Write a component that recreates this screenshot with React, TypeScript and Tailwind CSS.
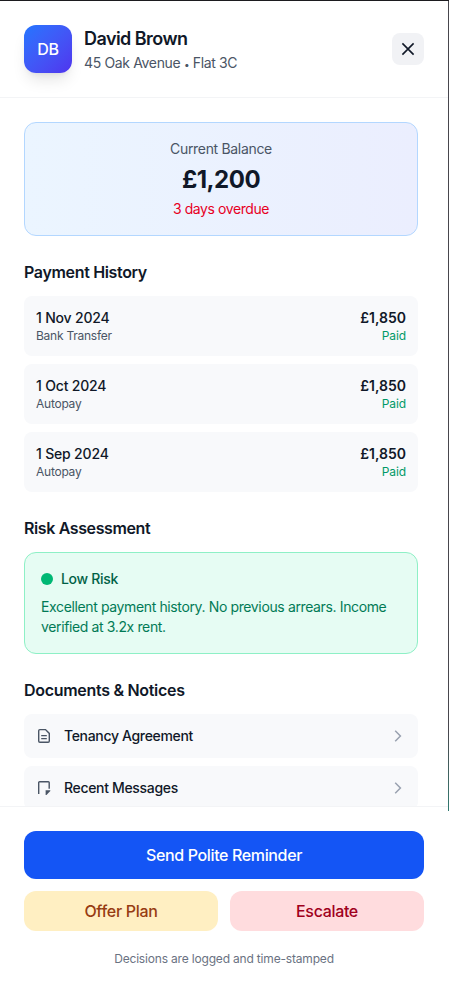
import React from "react";

type Payment = {
  date: string
  method: string
  amount: string
}

const payments: Payment[] = [
  { date: "1 Nov 2024", method: "Bank Transfer", amount: "£1,850" },
  { date: "1 Oct 2024", method: "Autopay", amount: "£1,850" },
  { date: "1 Sep 2024", method: "Autopay", amount: "£1,850" },
];

const FileIcon = () => (
  <svg viewBox="0 0 16 16" className="w-4 h-4" fill="none" stroke="currentColor" strokeWidth="1.4">
    <path d="M3.9 1.6h5.6l3.8 3.8v7.6a1.2 1.2 0 0 1-1.2 1.2H3.9a1.2 1.2 0 0 1-1.2-1.2V2.8a1.2 1.2 0 0 1 1.2-1.2z" />
    <path d="M5.2 7.6h5.6M5.2 10.6h5.6" />
  </svg>
);

const NoteIcon = () => (
  <svg viewBox="0 0 16 16" className="w-4 h-4" fill="none">
    <path d="M2.7 14V2.6a.9.9 0 0 1 .9-.9h8.7a.9.9 0 0 1 .9.9v6.2" stroke="currentColor" strokeWidth="1.4" />
    <path d="M9.6 10.3h4.7v.7L10.5 15h-.9z" fill="currentColor" />
  </svg>
);

const CloseIcon = () => (
  <svg viewBox="0 0 20 20" className="w-5 h-5" fill="none" stroke="currentColor" strokeWidth="1.6">
    <path d="M4.4 4.4l11.2 11.2M15.6 4.4L4.4 15.6" />
  </svg>
);

const ChevronIcon = () => (
  <svg viewBox="0 0 16 16" className="w-4 h-4 mr-px" fill="none" stroke="currentColor" strokeWidth="1.5">
    <path d="M6.2 2.8L11.4 8l-5.2 5.2" />
  </svg>
);

const PaymentRow = ({ payment }: { payment: Payment }) => {
  return (
    <div className="flex items-center justify-between p-3 bg-[#f8f9fb] rounded-lg">
      <div>
        <div className="text-sm font-medium text-gray-900 tracking-[-0.18px]">{payment.date}</div>
        <div className="text-xs text-gray-600 tracking-[-0.25px]">{payment.method}</div>
      </div>
      <div className="text-right">
        <div className="text-sm font-semibold text-gray-900">{payment.amount}</div>
        <div className="text-xs text-emerald-600 tracking-[-0.1px]">Paid</div>
      </div>
    </div>
  )
}

const DocumentRow = ({ icon, label }: { icon: React.ReactNode, label: string }) => {
  return (
    <button className="w-full flex items-center justify-between p-3 bg-[#f8f9fb] rounded-lg">
      <span className="flex items-center gap-3">
        <span className="w-4 h-4 text-gray-600">{icon}</span>
        <span className="text-sm font-medium text-gray-900 tracking-[-0.33px]">{label}</span>
      </span>
      <span className="text-gray-400">
        <ChevronIcon />
      </span>
    </button>
  )
}

const App = () => {
  return (
    <div className="relative flex flex-col w-[449px] h-[991px] overflow-hidden bg-white border-t border-[#1c1b1f] font-['Inter',sans-serif]">
      <div className="absolute right-0 top-0 w-px h-[810px] bg-linear-to-b from-[#47464d] from-90% to-[#2f7a70]" />

      <header className="flex items-center justify-between shrink-0 p-6 mr-px border-b border-gray-100">
        <div className="flex items-center gap-3">
          <div className="flex items-center justify-center w-12 h-12 rounded-xl bg-linear-to-br from-[#2175ff] to-[#4f33ee] text-white font-medium tracking-[-0.3px] shadow-lg">
            DB
          </div>
          <div>
            <h2 className="text-lg leading-7 font-semibold text-gray-900 tracking-[-0.55px]">David Brown</h2>
            <p className="text-sm text-gray-600 tracking-[-0.35px]">
              45 Oak Avenue <span className="text-[10px]">•</span> Flat 3C
            </p>
          </div>
        </div>
        <button className="flex items-center justify-center w-8 h-8 rounded-lg bg-[#f1f2f5] text-gray-900">
          <CloseIcon />
        </button>
      </header>

      <main className="flex-1 min-h-0 overflow-hidden p-6 mr-[7px] space-y-6">
        <section className="p-4 text-center rounded-xl border border-[#b3d7ff] bg-linear-to-r from-[#ebf5ff] to-[#ebeefe]">
          <div className="text-sm text-gray-600 mb-1 tracking-[-0.32px]">Current Balance</div>
          <div className="text-2xl leading-[34px] mb-0.5 font-bold text-gray-900 tracking-[-0.5px]">£1,200</div>
          <div className="text-sm text-[#e7001f] tracking-[-0.42px]">3 days overdue</div>
        </section>

        <section>
          <h3 className="font-semibold text-gray-900 mb-3 tracking-[-0.34px]">Payment History</h3>
          <div className="space-y-2">
            {payments.map((payment) => (
              <PaymentRow key={payment.date} payment={payment} />
            ))}
          </div>
        </section>

        <section>
          <h3 className="font-semibold text-gray-900 mb-3 tracking-[-0.38px]">Risk Assessment</h3>
          <div className="p-4 rounded-xl border border-[#8ef0c6] bg-[#e6fcf3]">
            <div className="flex items-center gap-2 mb-2">
              <span className="w-3 h-3 rounded-full bg-[#00b874]" />
              <span className="text-sm font-medium text-emerald-800 tracking-[-0.3px]">Low Risk</span>
            </div>
            <p className="text-sm text-emerald-700 tracking-[-0.37px]">
              Excellent payment history. No previous arrears. Income verified at 3.2x rent.
            </p>
          </div>
        </section>

        <section>
          <h3 className="font-semibold text-gray-900 mb-3 tracking-[-0.3px]">Documents &amp; Notices</h3>
          <div className="space-y-2">
            <DocumentRow icon={<FileIcon />} label="Tenancy Agreement" />
            <DocumentRow icon={<NoteIcon />} label="Recent Messages" />
          </div>
        </section>
      </main>

      <footer className="shrink-0 p-6 mr-px border-t border-gray-100 bg-white">
        <button className="w-full h-12 rounded-xl bg-[#1455f5] text-white font-medium tracking-[-0.36px]">
          Send Polite Reminder
        </button>
        <div className="grid grid-cols-2 gap-3 mt-3">
          <button className="h-10 rounded-xl bg-[#ffefc2] text-[#973c12] font-medium tracking-[-0.3px]">Offer Plan</button>
          <button className="h-10 rounded-xl bg-[#ffdcde] text-[#a0001c] font-medium tracking-[-0.33px]">Escalate</button>
        </div>
        <p className="mt-5 text-xs text-center text-gray-500 tracking-[-0.18px]">Decisions are logged and time-stamped</p>
      </footer>
    </div>
  )
}

export default App;
